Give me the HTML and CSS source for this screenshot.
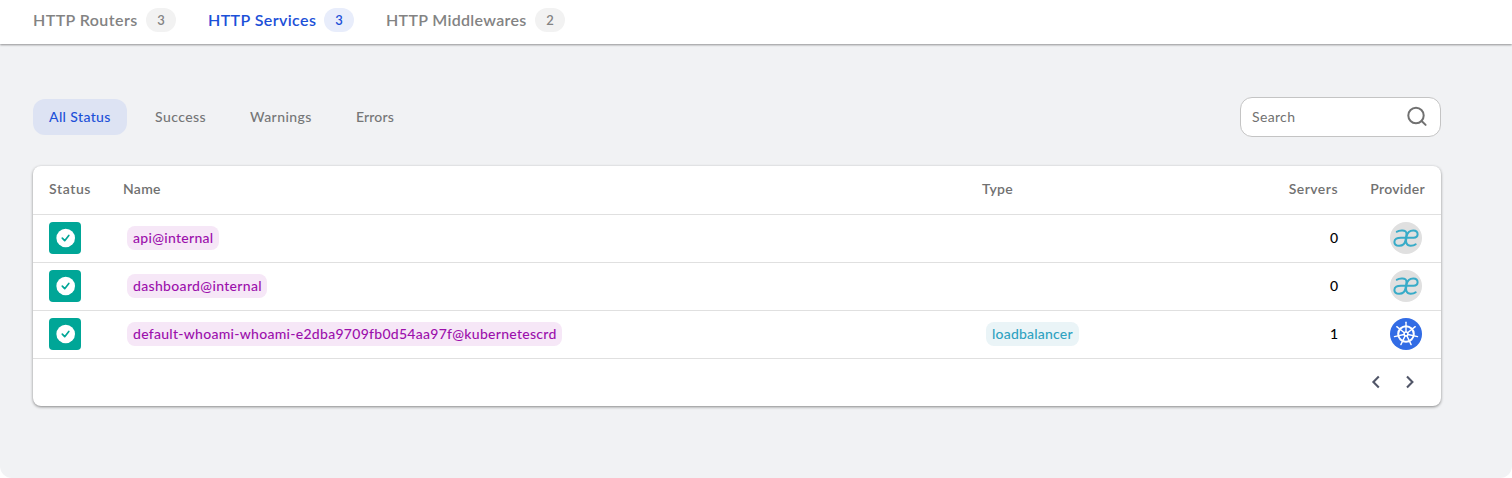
FILE: index.html
```html
<!DOCTYPE html>
<html lang="en">
<head>
<meta charset="utf-8">
<title>HTTP Services</title>
<link rel="stylesheet" href="styles.css">
</head>
<body>
<svg class="defs" width="0" height="0" aria-hidden="true">
  <symbol id="check" viewBox="0 0 32 32"><circle cx="16.7" cy="16" r="9.3" fill="#fff"/><path d="M13.3 16.2l2.4 2.5 4.1-5.2" fill="none" stroke="#00a697" stroke-width="1.7" stroke-linecap="round" stroke-linejoin="round"/></symbol>
  <symbol id="internal" viewBox="0 0 32 32"><circle cx="16" cy="16" r="16" fill="#e0e0e0"/><path d="M6.8 9.8C8.7 8.3 16.8 6.8 16.5 12.2L15.6 18C15 22.2 12.4 23.7 9.2 23.7C6.2 23.7 4.4 22.2 4.4 19.9C4.4 16.6 7.2 15.7 11 15.7H23.5C26.5 15.7 27.6 14.5 27.6 12.3C27.6 9.8 26 8.5 23.3 8.5C19.3 8.5 17.2 11.1 16.5 14.7C15.3 20.6 16.4 23.7 20.7 23.7C23 23.7 24.7 23.1 25.7 22.3" fill="none" stroke="#37abc8" stroke-width="2" stroke-linecap="round"/></symbol>
  <symbol id="kube" viewBox="-16 -16 32 32"><circle r="16" fill="#326ce5"/><g fill="none" stroke="#fff" stroke-linecap="round"><circle r="7.8" stroke-width="2"/><g stroke-width="1.4"><path id="spoke" d="M0-2.1V-11.8"/><use href="#spoke" transform="rotate(51.43)"/><use href="#spoke" transform="rotate(102.86)"/><use href="#spoke" transform="rotate(154.29)"/><use href="#spoke" transform="rotate(205.71)"/><use href="#spoke" transform="rotate(257.14)"/><use href="#spoke" transform="rotate(308.57)"/></g><circle r="1.9" stroke-width="1.5"/></g></symbol>
</svg>
<main class="page">
  <nav class="tabs">
    <a class="tab tab-routers"><span class="tab-label">HTTP Routers</span><span class="count">3</span></a>
    <a class="tab tab-services active"><span class="tab-label">HTTP Services</span><span class="count">3</span></a>
    <a class="tab tab-middlewares"><span class="tab-label">HTTP Middlewares</span><span class="count">2</span></a>
  </nav>
  <section class="content">
    <div class="toolbar">
      <div class="filters">
        <button class="filter f-all active">All Status</button>
        <button class="filter f-success">Success</button>
        <button class="filter f-warnings">Warnings</button>
        <button class="filter f-errors">Errors</button>
      </div>
      <div class="search"><span class="placeholder">Search</span><svg width="24" height="24" viewBox="0 0 24 24" fill="none" stroke="#717171" stroke-width="2"><circle cx="11" cy="10.5" r="7.7"/><path d="M16.6 16l4 3.9" stroke-linecap="round"/></svg></div>
    </div>
    <div class="card">
      <div class="row head"><span class="h-status">Status</span><span class="h-name">Name</span><span class="h-type">Type</span><span class="h-servers">Servers</span><span class="h-provider">Provider</span></div>
      <div class="row"><svg class="status"><use href="#check"/></svg><div class="cell"><span class="chip c-api">api@internal</span></div><div class="cell"></div><span class="servers">0</span><svg class="logo"><use href="#internal"/></svg></div>
      <div class="row"><svg class="status"><use href="#check"/></svg><div class="cell"><span class="chip c-dash">dashboard@internal</span></div><div class="cell"></div><span class="servers">0</span><svg class="logo"><use href="#internal"/></svg></div>
      <div class="row"><svg class="status"><use href="#check"/></svg><div class="cell"><span class="chip c-default">default-whoami-whoami-e2dba9709fb0d54aa97f@kubernetescrd</span></div><div class="cell"><span class="chip type">loadbalancer</span></div><span class="servers">1</span><svg class="logo"><use href="#kube"/></svg></div>
      <div class="pager">
        <svg width="24" height="24" viewBox="0 0 24 24"><path d="M14.8 6.6L9.4 12l5.4 5.4"/></svg>
        <svg width="24" height="24" viewBox="0 0 24 24"><path d="M9 6.6l5.4 5.4L9 17.4"/></svg>
      </div>
    </div>
  </section>
</main>
</body>
</html>
```
FILE: styles.css
```css
* { box-sizing: border-box; }
body { margin: 0; background: #fff; font-family: Lato, "Open Sans", sans-serif; font-size: 14px; color: #000; }
.defs { display: block; position: absolute; }
.page { height: 478px; display: flex; flex-direction: column; background: #f1f2f4; border-radius: 0 0 12px 12px; }
.tabs { height: 44px; flex: none; display: flex; align-items: flex-start; gap: 32px; padding: 8px 33px 0; background: #fff; box-shadow: 0 1px 2px rgba(0,0,0,.4); }
.tab { display: flex; align-items: center; gap: 8px; height: 24px; color: #838383; font-size: 16px; font-weight: 600; white-space: nowrap; }
.tab.active { color: #1c50d8; }
.tab-label { padding-bottom: 2px; }
.tab-routers .tab-label { width: 105px; letter-spacing: .42px; }
.tab-services .tab-label { width: 108px; letter-spacing: .4px; }
.tab-middlewares .tab-label { width: 141px; letter-spacing: .31px; }
.count { width: 30px; height: 24px; border-radius: 12px; background: #f2f2f2; font-size: 13px; line-height: 24px; text-align: center; }
.active .count { background: #e8edfb; }
.content { padding: 53px 71px 0 33px; }
.toolbar { display: flex; align-items: center; justify-content: space-between; height: 40px; }
.filters { display: flex; gap: 12px; }
.filter { height: 36px; border: 0; border-radius: 12px; background: transparent; padding: 0 0 2px 16px; text-align: left; white-space: nowrap; font: 500 14px Lato, sans-serif; color: #757677; }
.filter.active { background: #dde3f3; color: #1c50d8; }
.f-all { width: 94px; letter-spacing: .38px; }
.f-success { width: 83px; letter-spacing: .42px; }
.f-warnings { width: 94px; letter-spacing: .42px; }
.f-errors { width: 70px; letter-spacing: .15px; }
.search { width: 201px; height: 40px; display: flex; align-items: center; justify-content: space-between; padding: 0 11px; background: #fff; border: 1px solid #c4c4c4; border-radius: 12px; color: #717171; letter-spacing: .35px; }
.placeholder { padding-bottom: 2px; }
.card { margin-top: 29px; width: 1408px; height: 240px; background: #fff; border-radius: 8px; box-shadow: 0 1px 3px rgba(0,0,0,.45); }
.row { height: 48px; display: grid; grid-template-columns: 74px 859px 276px 80px 87px; align-items: center; padding-left: 16px; padding-bottom: 1px; border-bottom: 1px solid #e0e0e0; }
.row.head { height: 49px; color: #717171; font-weight: 600; letter-spacing: .48px; padding-bottom: 3px; }
.h-status { letter-spacing: .6px; }
.h-name, .h-type { letter-spacing: .3px; }
.status { width: 32px; height: 32px; background: #00a697; border-radius: 4px; }
.cell { display: flex; padding-left: 4px; }
.chip { height: 24px; padding: 0 6px; border-radius: 8px; line-height: 24px; background: #f6e7f7; color: #9c10ac; font-weight: 500; white-space: nowrap; }
.chip.type { width: 93px; background: #eaf4f7; color: #2fa2c1; letter-spacing: .2px; }
.c-api { width: 92px; letter-spacing: .3px; }
.c-dash { width: 140px; letter-spacing: .33px; }
.c-default { width: 435px; letter-spacing: .28px; }
.servers { text-align: right; font-weight: 500; line-height: 24px; }
.h-servers, .h-provider { text-align: right; }
.h-provider { letter-spacing: .3px; }
.logo { width: 32px; height: 32px; justify-self: end; margin-right: 3px; }
.pager { height: 46px; display: flex; align-items: center; justify-content: flex-end; gap: 10px; padding-right: 19px; }
.pager path { fill: none; stroke: #515668; stroke-width: 2.1; }
```
